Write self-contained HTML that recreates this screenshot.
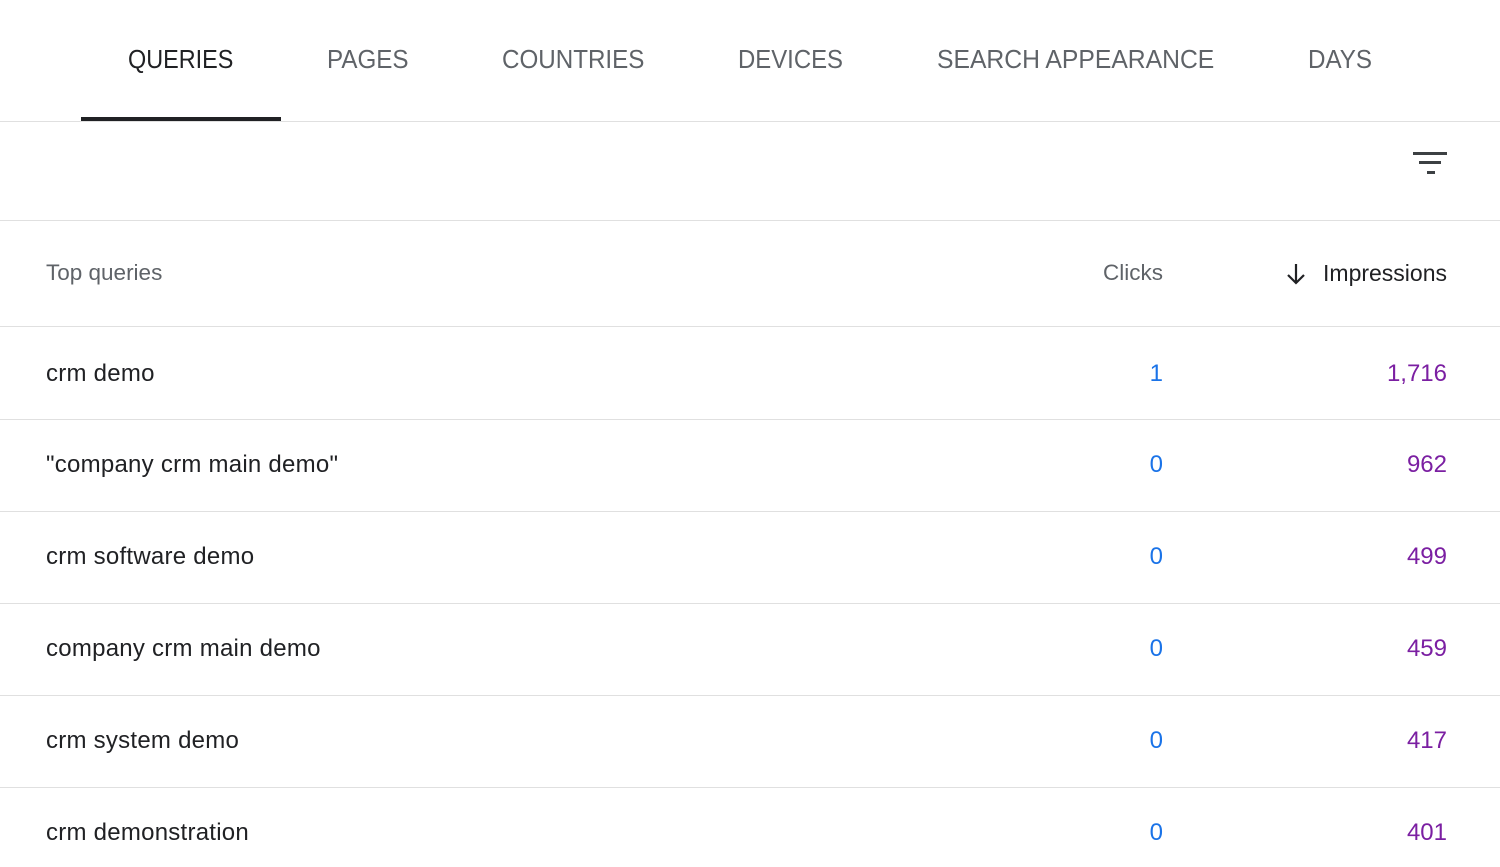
<!DOCTYPE html>
<html><head><style>
body{margin:0;width:1500px;height:867px;background:#fff;font-family:"Liberation Sans",Arial,sans-serif;overflow:hidden;position:relative}
.a{position:absolute;white-space:nowrap}
.tab{top:44px;font-size:26px;color:#5f6368;line-height:30px;transform-origin:left center}
.hr{position:absolute;left:0;width:1500px;height:1px;background:#e0e0e0}
.q{left:46px;font-size:24px;color:#202124;line-height:28px;letter-spacing:0.25px}
.c{right:337px;font-size:24px;color:#1a73e8;line-height:28px}
.i{right:53px;font-size:24px;color:#7b1fa2;line-height:28px}
.h{top:259px;font-size:22.5px;line-height:28px}
</style></head><body>
<div class="a tab" style="left:128px;color:#202124;transform:scaleX(0.9)">QUERIES</div>
<div class="a tab" style="left:327px;transform:scaleX(0.93)">PAGES</div>
<div class="a tab" style="left:502px;transform:scaleX(0.93)">COUNTRIES</div>
<div class="a tab" style="left:738px;transform:scaleX(0.92)">DEVICES</div>
<div class="a tab" style="left:937px;transform:scaleX(0.95)">SEARCH APPEARANCE</div>
<div class="a tab" style="left:1308px;transform:scaleX(0.93)">DAYS</div>
<div class="a" style="left:81px;top:117px;width:200px;height:4px;background:#202124"></div>
<div class="hr" style="top:121px"></div>
<svg class="a" style="left:1410px;top:148px" width="40" height="30"><g fill="#3c4043"><rect x="3" y="4" width="34" height="3"/><rect x="9" y="13" width="22" height="3"/><rect x="17" y="23" width="8" height="3"/></g></svg>
<div class="hr" style="top:220px"></div>
<div class="a h" style="left:46px;color:#5f6368">Top queries</div>
<div class="a h" style="right:337px;color:#5f6368">Clicks</div>
<svg class="a" style="left:1283px;top:261px" width="26" height="26"><path d="M13 3v19M5 14l8 8 8-8" stroke="#202124" stroke-width="2.2" fill="none"/></svg>
<div class="a h" style="right:53px;color:#202124;font-size:23px">Impressions</div>
<div class="hr" style="top:326px"></div>
<div class="a q" style="top:360px">crm demo</div><div class="a c" style="top:360px">1</div><div class="a i" style="top:360px">1,716</div>
<div class="hr" style="top:419px"></div>
<div class="a q" style="top:451px">"company crm main demo"</div><div class="a c" style="top:451px">0</div><div class="a i" style="top:451px">962</div>
<div class="hr" style="top:511px"></div>
<div class="a q" style="top:543px">crm software demo</div><div class="a c" style="top:543px">0</div><div class="a i" style="top:543px">499</div>
<div class="hr" style="top:603px"></div>
<div class="a q" style="top:635px">company crm main demo</div><div class="a c" style="top:635px">0</div><div class="a i" style="top:635px">459</div>
<div class="hr" style="top:695px"></div>
<div class="a q" style="top:727px">crm system demo</div><div class="a c" style="top:727px">0</div><div class="a i" style="top:727px">417</div>
<div class="hr" style="top:787px"></div>
<div class="a q" style="top:819px">crm demonstration</div><div class="a c" style="top:819px">0</div><div class="a i" style="top:819px">401</div>
</body></html>
